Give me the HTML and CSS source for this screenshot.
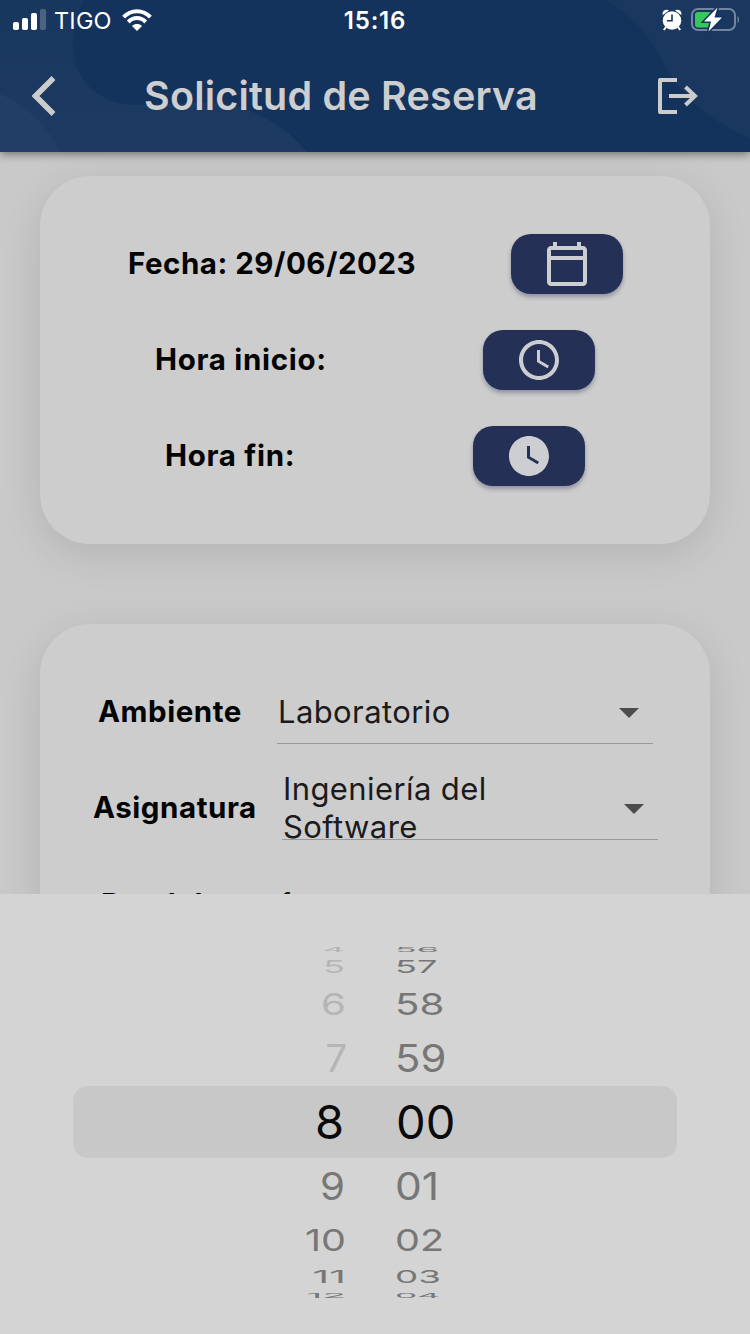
FILE: index.html
```html
<!DOCTYPE html>
<html lang="es">
<head>
<meta charset="utf-8">
<title>Solicitud de Reserva</title>
<link rel="stylesheet" href="styles.css">
</head>
<body>
<div class="screen">
  <header class="header">
    <svg class="header-art" width="750" height="152" viewBox="0 0 750 152">
      <defs>
        <linearGradient id="wave" x1="0" y1="0" x2="0" y2="1"><stop offset="0" stop-color="#18375f"/><stop offset="1" stop-color="#1d3a62"/></linearGradient>
      </defs>
      <path fill="url(#wave)" d="M0 0H84C76 15 73 30 73 47C73 80 100 105 135 105C180 105 220 97 250 111C272 120 292 134 307 152H0Z"/>
      <path fill="#213f66" d="M0 94C25 104 48 126 60 152H0Z"/>
      <path fill="#1a385f" d="M605 0C630 13 648 33 662 60C680 97 712 122 750 138V0Z"/>
    </svg>
    <div class="status">
      <div class="status-left">
        <svg width="34" height="22" viewBox="0 0 34 22" fill="#fff"><rect x="0" y="13" width="6" height="8" rx="1.8"/><rect x="9" y="9" width="6" height="12" rx="1.8"/><rect x="18" y="4" width="6" height="17" rx="1.8"/><rect x="27" y="0" width="6" height="21" rx="1.8" opacity=".22"/></svg>
        <span class="carrier">TIGO</span>
        <svg class="wifi" width="30" height="22" viewBox="0 0 30 22" fill="none" stroke="#fff" stroke-width="4"><path d="M1.600 8.200C9 .2 21 .2 28.400 8.200"/><path d="M6.300 13C11.300 7.800 18.700 7.800 23.700 13"/><path fill="#fff" stroke="none" d="M15 22L10 17C13 14.400 17 14.400 20 17Z"/></svg>
      </div>
      <span class="time">15:16</span>
      <div class="status-right">
        <svg width="20" height="22" viewBox="0 0 20 22"><g fill="#fff"><circle cx="10" cy="11.500" r="9.300"/><path d="M.8 6C-.5 2.500 3.500 -.5 7 1.400ZM19.200 6C20.500 2.500 16.500 -.5 13 1.400Z"/></g><path stroke="#fff" stroke-width="2" d="M4 18L1.800 21M16 18L18.200 21"/><path fill="none" stroke="#14335c" stroke-width="1.600" d="M10 5.500V11.800H5"/></svg>
        <svg width="49" height="26" viewBox="0 0 49 26"><rect x="1" y="2" width="43" height="21" rx="6" fill="none" stroke="#74869f" stroke-width="2"/><path fill="#74869f" d="M46.500 9C48.500 10 48.500 15 46.500 16Z"/><path fill="#34c759" d="M7 5H20L14 13H18V20.500H7A3 3 0 0 1 4 17.500V8A3 3 0 0 1 7 5Z"/><path fill="#fff" stroke="#14335c" stroke-width="3" paint-order="stroke" d="M26.500 .5L13 14.500H20L17.500 24.500L31 10.500H23.500Z"/></svg>
      </div>
    </div>
    <div class="bar">
      <svg class="back" width="24" height="40" viewBox="0 0 24 40" fill="none" stroke="#ccc" stroke-width="5.500"><path d="M21.500 2L3.500 20L21.500 38"/></svg>
      <h1 class="title">Solicitud de Reserva</h1>
      <svg class="exit" width="42" height="38" viewBox="0 0 42 38" fill="none" stroke="#ccc" stroke-width="4"><path stroke-linejoin="round" d="M20 3H3V35H20"/><path d="M12 19H38M28.500 10L38 19L28.500 28"/></svg>
    </div>
  </header>
  <main class="content">
    <section class="card card-time">
      <div class="row row-date"><span class="label">Fecha: 29/06/2023</span>
        <button class="btn"><svg width="48" height="48" viewBox="0 0 24 24" fill="#cdced2"><path d="M20 3h-1V1h-2v2H7V1H5v2H4c-1.100 0-2 .9-2 2v16c0 1.100.9 2 2 2h16c1.100 0 2-.9 2-2V5c0-1.100-.9-2-2-2zm0 18H4V10h16v11zm0-13H4V5h16v3z"/></svg></button></div>
      <div class="row row-start"><span class="label">Hora inicio:</span>
        <button class="btn"><svg width="48" height="48" viewBox="0 0 24 24" fill="#cdced2"><path d="M11.990 2C6.470 2 2 6.480 2 12s4.470 10 9.990 10C17.520 22 22 17.520 22 12S17.520 2 11.990 2zM12 20c-4.420 0-8-3.580-8-8s3.580-8 8-8 8 3.580 8 8-3.580 8-8 8zm.5-13H11v6l5.250 3.150.75-1.230-4.500-2.670z"/></svg></button></div>
      <div class="row row-end"><span class="label">Hora fin:</span>
        <button class="btn"><svg width="48" height="48" viewBox="0 0 24 24" fill="#cdced2"><path d="M11.990 2C6.470 2 2 6.480 2 12s4.470 10 9.990 10C17.520 22 22 17.520 22 12S17.520 2 11.990 2zm4.260 14.150L11 13V7h1.500v5.250l4.500 2.670-.75 1.230z"/></svg></button></div>
    </section>
    <section class="card card-form">
      <div class="field field-room"><span class="label">Ambiente</span><div class="select"><span class="value">Laboratorio</span><i class="caret"></i></div></div>
      <div class="field field-subject"><span class="label">Asignatura</span><div class="select"><span class="value">Ingeniería del Software</span><i class="caret"></i></div></div>
      <div class="field field-group"><span class="label">Paralelo</span><div class="select"><span class="value">1</span></div></div>
    </section>
  </main>
  <div class="sheet">
    <div class="picker">
      <div class="line r1"><span class="h past">4</span><span class="m">56</span></div>
      <div class="line r2"><span class="h past">5</span><span class="m">57</span></div>
      <div class="line r3"><span class="h past">6</span><span class="m">58</span></div>
      <div class="line r4"><span class="h past">7</span><span class="m">59</span></div>
      <div class="line selected"><span class="h">8</span><span class="m">00</span></div>
      <div class="line r6"><span class="h">9</span><span class="m">01</span></div>
      <div class="line r7"><span class="h">10</span><span class="m">02</span></div>
      <div class="line r8"><span class="h">11</span><span class="m">03</span></div>
      <div class="line r9"><span class="h">12</span><span class="m">04</span></div>
    </div>
  </div>
</div>
</body>
</html>
```
FILE: styles.css
```css
* { box-sizing: border-box; margin: 0; padding: 0; }
body { width: 750px; height: 1334px; overflow: hidden; font-family: Inter, "Liberation Sans", sans-serif; background: #c9c9c9; }
svg { display: block; flex: none; }
.screen { height: 1334px; display: flex; flex-direction: column; overflow: hidden; }
.header { position: relative; z-index: 2; height: 152px; flex: none; background: #14335c; box-shadow: 0 3px 8px rgba(0,0,0,.4); }
.header-art { position: absolute; inset: 0; z-index: -1; }
.status { height: 40px; display: grid; grid-template-columns: 1fr auto 1fr; align-items: center; padding: 0 10px 0 13px; color: #fff; }
.status-left, .status-right { display: flex; align-items: center; }
.status-right { justify-content: flex-end; gap: 9px; }
.carrier { font-size: 23.500px; margin-left: 7px; width: 60px; letter-spacing: .2px; }
.wifi { margin-left: 8px; }
.time { font-size: 24px; font-weight: 600; letter-spacing: .8px; margin-right: 3px; }
.bar { height: 112px; display: flex; align-items: center; padding: 0 51px 0 32px; }
.title { font-size: 39.500px; font-weight: 600; letter-spacing: .2px; color: #cdced0; margin-left: 88px; width: 514px; white-space: nowrap; line-height: 48px; }
.content { height: 742px; flex: none; padding: 24px 40px 0; overflow: hidden; display: flex; flex-direction: column; gap: 80px; }
.card { background: #cdcdcd; border-radius: 50px; box-shadow: 0 10px 40px rgba(0,0,0,.11); flex: none; }
.card-time { height: 368px; padding-top: 40px; }
.row { height: 96px; display: flex; align-items: center; }
.label { font-size: 29.500px; font-weight: 700; color: #040404; white-space: nowrap; flex: none; letter-spacing: .55px; padding-bottom: 3px; }
.row-date { padding-left: 88px; }
.row-date .label { width: 383px; letter-spacing: .5px; }
.row-start { padding-left: 115px; }
.row-start .label { width: 328px; letter-spacing: .7px; }
.row-end { padding-left: 125px; }
.row-end .label { width: 308px; letter-spacing: .7px; }
.btn { width: 112px; height: 60px; border: 0; border-radius: 20px; background: #243056; display: flex; align-items: center; justify-content: center; box-shadow: 0 3px 4px rgba(30,40,80,.35); }
.card-form { height: 500px; padding-top: 40px; }
.field { height: 96px; display: flex; align-items: center; }
.field-room { padding-left: 58px; }
.field-subject { padding-left: 53px; }
.field-group { padding-left: 61px; }
.field-room .label { width: 179px; }
.field-subject .label { width: 189px; }
.field-group .label { width: 178px; padding-bottom: 0; }
.select { width: 376px; height: 64px; display: flex; align-items: center; justify-content: space-between; border-bottom: 1px solid #999; padding: 0 14px 0 1px; }
.value { font-size: 31px; line-height: 38px; letter-spacing: .4px; color: #1b1b1b; width: 240px; }
.caret { border: 10px solid transparent; border-top-color: #4c4c4c; border-bottom: 0; margin-top: 3px; }
.sheet { height: 440px; flex: none; position: relative; z-index: 3; background: #d4d4d4; padding: 48px 73px 0; }
.picker { display: grid; grid-template-rows: 14px 22px 52px 56px 72px 57px 51px 22px 15px; }
.line { display: grid; grid-template-columns: 272px 280px; column-gap: 50px; align-items: center; font-size: 38px; line-height: 0; color: #777; }
.h { text-align: right; transform-origin: right center; }
.m { transform-origin: left center; }
.past { color: #b5b5b5; }
.selected { background: #c8c8c8; border-radius: 15px; color: #0a0a0a; font-size: 47px; }
.selected .h { transform: translateX(-1px); }
.selected .m { transform: translateX(1px); }
.r1 span { transform: translateY(1px) scale(.94,.16); }
.r2 span { transform: scale(.95,.46); }
.r3 span { transform: scale(1.06,.78); }
.r4 span { transform: scaleX(1.1); }
.r4 .h { transform: translateX(2px); }
.r6 span { transform: translateY(-1px) scaleX(1.06); }
.r6 .m { transform: translateY(-1px) scaleX(1.12); }
.r7 span { transform: translateY(-1px) scale(1.04,.78); }
.r8 span { transform: scale(.97,.46); }
.r8 .h { transform: scale(1.08,.46); }
.r9 span { transform: scale(.93,.16); }
.r9 .h { transform: translateX(1px) scale(1.02,.16); }
.r3 .h, .r7 .h, .r8 .h { position: relative; left: 1px; }
```
